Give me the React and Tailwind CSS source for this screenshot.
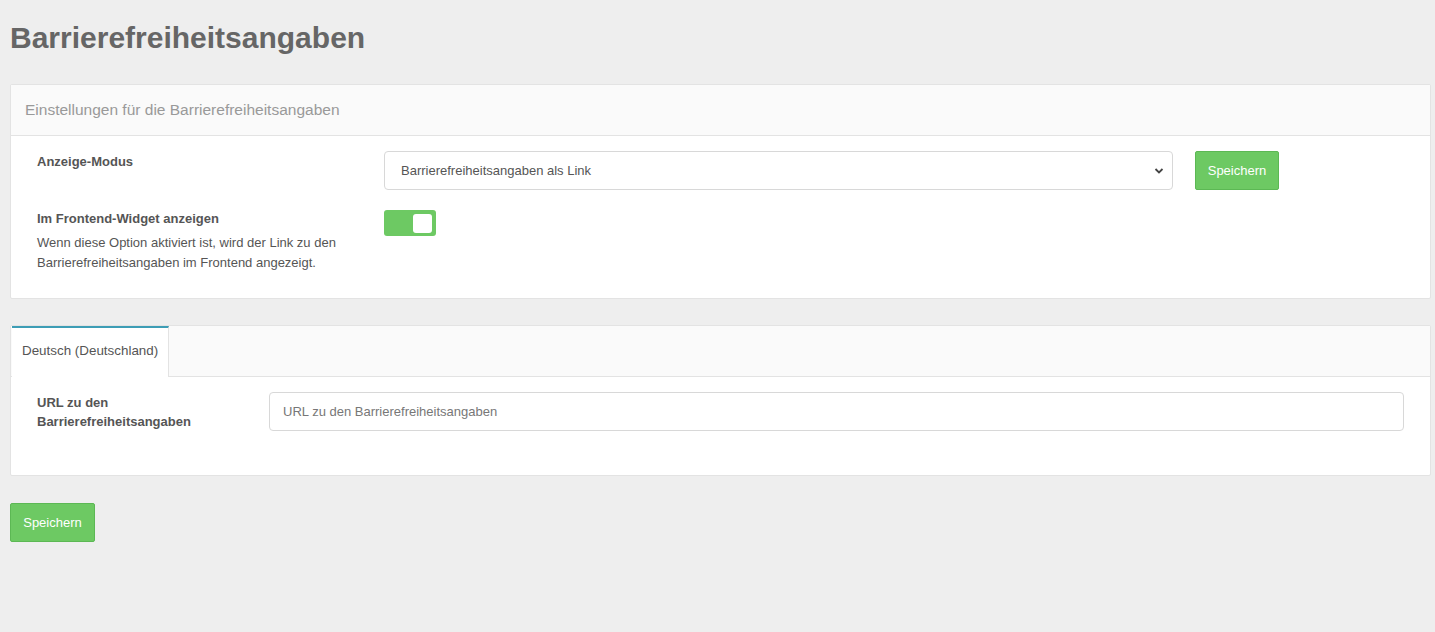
import React from "react";

export default function App() {
  return (
    <div className="min-h-[632px] bg-[#eeeeee] pl-[10px] pr-[4px] pt-[20px] pb-[90px] font-['Liberation_Sans',Arial,sans-serif] text-[#555]">
      <h1 className="text-[30px] leading-[36px] font-bold text-[#666] mb-[28px]">Barrierefreiheitsangaben</h1>

      <div className="bg-white border border-[#e3e3e3] rounded-[2px]">
        <div className="h-[51px] bg-[#fafafa] border-b border-[#e3e3e3] flex items-center px-[14px] text-[15.5px] text-[#999]">
          Einstellungen für die Barrierefreiheitsangaben
        </div>
        <div className="pl-[26px] pr-[20px] pt-[15px] pb-[25px]">
          <div className="flex items-start">
            <div className="w-[347px] pt-[2px] text-[13px] leading-[18px] font-bold">Anzeige-Modus</div>
            <div className="w-[789px] h-[39px] border border-[#d8d8d8] rounded-[4px] flex items-center justify-between pl-[16px] pr-[8px] text-[13px] text-[#555]">
              <span>Barrierefreiheitsangaben als Link</span>
              <svg width="10" height="8" viewBox="0 0 10 8" fill="none"><path d="M1.5 2l3.5 3.5L8.5 2" stroke="#444" strokeWidth="1.8" /></svg>
            </div>
            <button className="ml-[22px] w-[84px] h-[39px] bg-[#6dc963] border border-[#5cb854] rounded-[2px] text-white text-[13px]">Speichern</button>
          </div>
          <div className="flex items-start mt-[19px]">
            <div className="w-[347px] text-[13px] leading-[20px]">
              <div className="font-bold">Im Frontend-Widget anzeigen</div>
              <div className="mt-[4px]">Wenn diese Option aktiviert ist, wird der Link zu den Barrierefreiheitsangaben im Frontend angezeigt.</div>
            </div>
            <div className="mt-[1px] w-[52px] h-[26px] bg-[#6dc963] rounded-[3px] flex items-center justify-end pr-[4px]">
              <div className="w-[19px] h-[19px] bg-white rounded-[3px]"></div>
            </div>
          </div>
        </div>
      </div>

      <div className="mt-[26px] bg-white border border-[#e3e3e3] rounded-[2px]">
        <div className="h-[51px] bg-[#fafafa] border-b border-[#e3e3e3] flex items-stretch">
          <div className="ml-[1px] w-[157px] -mb-[1px] bg-white border-t-2 border-[#3d9db5] border-r border-r-[#e3e3e3] flex items-center pl-[10px] pb-[2px] text-[13.4px] text-[#555]">
            Deutsch (Deutschland)
          </div>
        </div>
        <div className="pl-[26px] pr-[26px] pt-[15px] pb-[44px] flex items-start">
          <div className="w-[232px] pt-[1px] text-[13px] leading-[19px] font-bold">URL zu den<br />Barrierefreiheitsangaben</div>
          <div className="flex-1 h-[39px] border border-[#d8d8d8] rounded-[4px] flex items-center pl-[13px] text-[13px] text-[#777]">
            URL zu den Barrierefreiheitsangaben
          </div>
        </div>
      </div>

      <button className="mt-[27px] w-[85px] h-[39px] bg-[#6dc963] border border-[#5cb854] rounded-[2px] text-white text-[13px]">Speichern</button>
    </div>
  );
}
